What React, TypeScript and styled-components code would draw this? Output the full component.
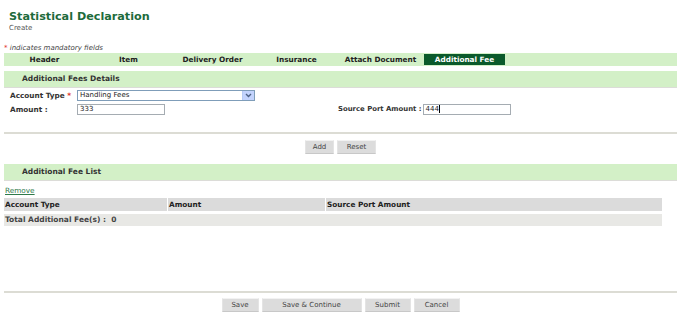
import React from 'react';
import styled, { createGlobalStyle } from 'styled-components';

const GlobalStyle = createGlobalStyle`
  body {
    margin: 0;
    background: #ffffff;
    font-family: "DejaVu Sans", Verdana, sans-serif;
  }
`;

const Page = styled.div`
  width: 677px;
  height: 314px;
  overflow: hidden;
  color: #333333;
  font-size: 7.5px;
`;

const Heading = styled.div`
  padding: 10px 0 0 9px;
`;

const Title = styled.h1`
  margin: 0;
  font-size: 11.2px;
  line-height: 14px;
  font-weight: bold;
  color: #1d6b3b;
`;

const SubTitle = styled.div`
  font-size: 7px;
  line-height: 9px;
  color: #555555;
`;

const Note = styled.div`
  margin-top: 10px;
  padding-left: 4px;
  font-size: 7px;
  line-height: 10px;
  font-style: italic;
  color: #444444;
`;

const Star = styled.span`
  color: #e0301e;
  font-style: normal;
`;

const Body = styled.div`
  margin-left: 4px;
`;

const TabBar = styled.div`
  display: flex;
  gap: 3px;
  height: 13px;
  background: #d3f0c7;
`;

const Tab = styled.div<{ $active?: boolean }>`
  width: 81px;
  text-align: center;
  font-size: 7.3px;
  font-weight: bold;
  line-height: 12px;
  margin-top: 1px;
  height: 11px;
  color: ${p => (p.$active ? '#ffffff' : '#222222')};
  background: ${p => (p.$active ? '#0b5a2b' : 'transparent')};
`;

const Band = styled.div<{ $top: number }>`
  margin-top: ${p => p.$top}px;
  height: 16px;
  padding-left: 18px;
  background: #d3f0c7;
  border-bottom: 1px solid #dcdcd8;
  font-size: 7.5px;
  font-weight: bold;
  line-height: 16px;
  color: #333333;
`;

const Form = styled.div`
  display: grid;
  grid-template-columns: 67px 261px auto auto;
  justify-content: start;
  row-gap: 3px;
  margin-top: 2px;
  padding-left: 6px;
`;

const Label = styled.label`
  font-size: 7.3px;
  font-weight: bold;
  line-height: 11px;
  color: #333333;
  white-space: nowrap;
`;

const SideLabel = styled(Label)`
  font-size: 6.9px;
  padding-right: 1px;
`;

const SelectBox = styled.div`
  grid-column: 2 / span 3;
  display: flex;
  width: 176px;
  height: 9px;
  border: 1px solid #7f9db9;
  background: #ffffff;
  font-size: 7px;
  line-height: 9px;
`;

const SelectText = styled.span`
  flex: 1;
  padding-left: 2px;
  color: #222222;
`;

const SelectArrow = styled.span`
  display: flex;
  align-items: center;
  justify-content: center;
  width: 11px;
  background: #c3d3fd;
  border-left: 1px solid #b7cbf5;
`;

const TextInput = styled.div<{ $w: number }>`
  width: ${p => p.$w}px;
  height: 9px;
  border: 1px solid #a5acb2;
  padding-left: 2px;
  font-size: 7px;
  line-height: 9px;
  color: #222222;
`;

const Caret = styled.span`
  border-right: 1px solid #000000;
`;

const Rule = styled.div<{ $top: number }>`
  margin-top: ${p => p.$top}px;
  height: 2px;
  background: #dcdcd4;
`;

const ButtonRow = styled.div<{ $top: number }>`
  display: flex;
  justify-content: center;
  gap: 3px;
  margin-top: ${p => p.$top}px;
`;

const Button = styled.button<{ $w: number }>`
  width: ${p => p.$w}px;
  height: 14px;
  padding: 0;
  border: 1px solid #e4e4e4;
  border-top-color: #f2f2f2;
  border-bottom-color: #c8c8c8;
  background: #dcdcdc;
  font-family: "DejaVu Sans", Verdana, sans-serif;
  font-size: 7px;
  color: #444444;
`;

const RemoveLink = styled.a`
  display: block;
  margin: 5px 0 0 1px;
  font-size: 7.3px;
  line-height: 9px;
  color: #2f7a4a;
  text-decoration: underline;
`;

const Table = styled.div`
  width: 658px;
  margin-top: 3px;
`;

const HeadRow = styled.div`
  display: grid;
  grid-template-columns: 163px 157px 1fr;
  column-gap: 1px;
  height: 13px;
`;

const HeadCell = styled.div`
  background: #dbdbdb;
  padding-left: 1px;
  font-size: 7.3px;
  font-weight: bold;
  line-height: 13px;
  color: #222222;
`;

const TotalRow = styled.div`
  margin-top: 3px;
  height: 12px;
  padding-left: 1px;
  background: #e8e8e5;
  font-size: 7.5px;
  font-weight: bold;
  line-height: 12px;
  color: #444444;
`;

const tabs = ['Header', 'Item', 'Delivery Order', 'Insurance', 'Attach Document', 'Additional Fee'];

export default function App() {
  return (
    <Page>
      <GlobalStyle />
      <Heading>
        <Title>Statistical Declaration</Title>
        <SubTitle>Create</SubTitle>
      </Heading>
      <Note>
        <Star>*</Star> indicates mandatory fields
      </Note>
      <Body>
        <TabBar>
          {tabs.map(t => (
            <Tab key={t} $active={t === 'Additional Fee'}>
              {t}
            </Tab>
          ))}
        </TabBar>

        <Band $top={5}>Additional Fees Details</Band>
        <Form>
          <Label>
            Account Type <Star>*</Star>
          </Label>
          <SelectBox>
            <SelectText>Handling Fees</SelectText>
            <SelectArrow>
              <svg width="7" height="5" viewBox="0 0 7 5">
                <path d="M1 1 L3.5 3.5 L6 1" fill="none" stroke="#4d6185" strokeWidth="1.4" />
              </svg>
            </SelectArrow>
          </SelectBox>
          <Label>Amount :</Label>
          <TextInput $w={84}>333</TextInput>
          <SideLabel>Source Port Amount :</SideLabel>
          <TextInput $w={84}>
            444<Caret />
          </TextInput>
        </Form>

        <Rule $top={17} />
        <ButtonRow $top={6}>
          <Button $w={29}>Add</Button>
          <Button $w={39}>Reset</Button>
        </ButtonRow>

        <Band $top={10}>Additional Fee List</Band>
        <RemoveLink>Remove</RemoveLink>
        <Table>
          <HeadRow>
            <HeadCell>Account Type</HeadCell>
            <HeadCell>Amount</HeadCell>
            <HeadCell>Source Port Amount</HeadCell>
          </HeadRow>
          <TotalRow>Total Additional Fee(s) :&nbsp; 0</TotalRow>
        </Table>

        <Rule $top={65} />
        <ButtonRow $top={5}>
          <Button $w={37}>Save</Button>
          <Button $w={100}>Save &amp; Continue</Button>
          <Button $w={46}>Submit</Button>
          <Button $w={46}>Cancel</Button>
        </ButtonRow>
      </Body>
    </Page>
  );
}
